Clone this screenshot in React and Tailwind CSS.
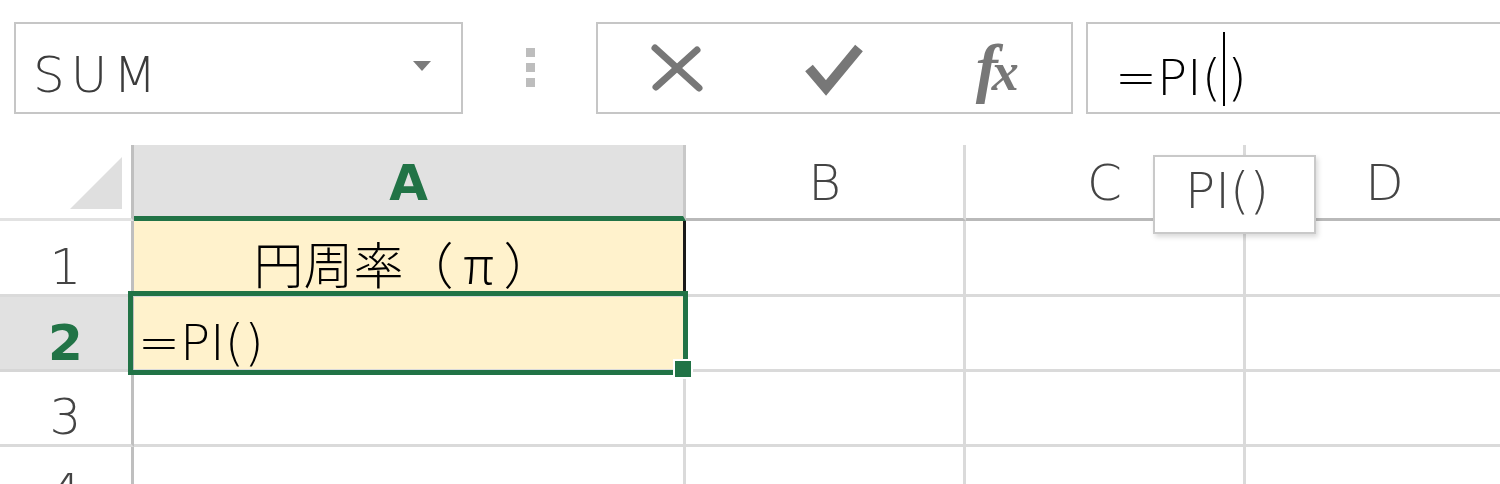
import React from "react";

const rows = [
  { n: "1", h: "h-[76px]" },
  { n: "2", h: "h-[75px]" },
  { n: "3", h: "h-[75px]" },
  { n: "4", h: "h-[75px]" },
];

const title = ["円", "周", "率", "（", "π", "）"];

function Dots() {
  return (
    <div className="ml-[63px] mt-[26px] flex flex-col gap-[6px]">
      <span className="h-[9px] w-[9px] bg-[#bdbdbd]" />
      <span className="h-[9px] w-[9px] bg-[#bdbdbd]" />
      <span className="h-[9px] w-[9px] bg-[#bdbdbd]" />
    </div>
  );
}

function RowHeader({ n, h }) {
  if (n === "2") {
    return (
      <div className={`${h} flex items-end justify-center border-r-[3px] border-b-[3px] border-r-[#bfbfbf] border-b-[#d6d6d6] bg-[#e1e1e1] pb-[1px] text-[50px] font-bold leading-[50px] text-[#217346]`}>
        {n}
      </div>
    );
  }
  return (
    <div className={`${h} flex items-end justify-center border-r-[3px] border-b-[3px] border-r-[#bfbfbf] border-b-[#dadada] pb-[2px] text-[50px] leading-[50px] text-[#444]`}>
      {n}
    </div>
  );
}

function Blank({ h }) {
  return <div className={`${h} border-r-[3px] border-b-[3px] border-[#dadada]`} />;
}

export default function App() {
  return (
    <div className="relative h-[484px] w-[1500px] overflow-hidden bg-white font-['DejaVu_Sans','Noto_Sans_CJK_JP',sans-serif] font-light">
      {/* formula bar */}
      <div className="flex h-[145px] items-start pt-[22px]">
        <div className="ml-[14px] flex h-[92px] w-[449px] items-start border-2 border-[#c6c6c6] pl-[17px] pt-[26px]">
          <span className="text-[50px] leading-[50px] tracking-[6px] text-[#3c3c3c]">SUM</span>
          <svg className="ml-auto mr-[30px] mt-[11px]" width="18" height="10" viewBox="0 0 18 10">
            <path d="M0 0h18L9 10z" fill="#7b7b7b" />
          </svg>
        </div>

        <Dots />

        <div className="ml-[61px] grid h-[92px] w-[477px] grid-cols-3 items-center border-2 border-[#c6c6c6]">
          <div className="flex justify-center">
            <svg width="54" height="50" viewBox="0 0 54 50">
              <path d="M5 5 L49 45" stroke="#777" strokeWidth="7" strokeLinecap="round" fill="none" />
              <path d="M47 7 L6 44" stroke="#777" strokeWidth="7" strokeLinecap="round" fill="none" />
            </svg>
          </div>
          <div className="flex justify-center pt-[4px]">
            <svg width="58" height="52" viewBox="0 0 58 52">
              <polyline points="4,24 21,44 54,4" stroke="#777" strokeWidth="10" fill="none" strokeLinejoin="miter" />
            </svg>
          </div>
          <div className="flex justify-center pl-[4px]">
            <span className="font-['Liberation_Serif',serif] text-[66px] font-bold italic leading-none tracking-[-6px] text-[#777]">
              f<span className="text-[54px]">x</span>
            </span>
          </div>
        </div>

        <div className="ml-[13px] flex h-[92px] flex-1 items-start border-2 border-r-0 border-[#c6c6c6] pl-[27px] pt-[29px] text-[50px] leading-[50px] text-black">
          <span>=PI(</span>
          <span className="mx-[2px] -mt-[21px] h-[74px] w-[2px] bg-black" />
          <span>)</span>
        </div>
      </div>

      {/* sheet */}
      <div className="grid grid-cols-[134px_552px_280px_280px_280px]">
        <div className="flex h-[76px] items-end justify-end border-r-[3px] border-b-[3px] border-r-[#bfbfbf] border-b-[#e2e2e2] pr-[9px] pb-[9px]">
          <svg width="52" height="52" viewBox="0 0 52 52">
            <polygon points="52,0 52,52 0,52" fill="#dfdfdf" />
          </svg>
        </div>
        <div className="flex h-[76px] items-end justify-center border-r-[3px] border-b-[5px] border-r-[#c8c8c8] border-b-[#217346] bg-[#e1e1e1] pb-[8px] text-[50px] font-bold leading-[50px] text-[#217346]">
          A
        </div>
        <div className="flex h-[76px] items-end justify-center border-r-[3px] border-b-[3px] border-r-[#dadada] border-b-[#b9b9b9] pb-[10px] text-[50px] leading-[50px] text-[#444]">
          B
        </div>
        <div className="flex h-[76px] items-end justify-center border-r-[3px] border-b-[3px] border-r-[#dadada] border-b-[#b9b9b9] pb-[10px] text-[50px] leading-[50px] text-[#444]">
          C
        </div>
        <div className="flex h-[76px] items-end justify-center border-r-[3px] border-b-[3px] border-r-[#dadada] border-b-[#b9b9b9] pb-[10px] text-[50px] leading-[50px] text-[#444]">
          D
        </div>

        {rows.map((r) => (
          <React.Fragment key={r.n}>
            <RowHeader n={r.n} h={r.h} />
            {r.n === "1" && (
              <div className="flex h-[76px] items-end justify-center border-r-[3px] border-b-[3px] border-r-[#1a1a1a] border-b-[#dadada] bg-[#fff2cc] pr-[10px] pb-[7px] font-['Noto_Sans_CJK_JP',sans-serif] text-[50px] font-light leading-[50px] text-black">
                {title.map((c, i) => (
                  <span key={i} className="inline-block w-[50px] text-center">
                    {c}
                  </span>
                ))}
              </div>
            )}
            {r.n === "2" && (
              <div className="flex h-[75px] items-end border-r-[3px] border-b-[3px] border-[#dadada] bg-[#fff2cc] pl-[4px] pb-[1px] text-[50px] leading-[50px] text-black">
                =PI()
              </div>
            )}
            {r.n !== "1" && r.n !== "2" && <Blank h={r.h} />}
            <Blank h={r.h} />
            <Blank h={r.h} />
            <Blank h={r.h} />
          </React.Fragment>
        ))}
      </div>

      {/* selection */}
      <div className="absolute left-[128px] top-[291px] h-[84px] w-[560px] border-[5px] border-[#217346]" />
      <div className="absolute left-[673px] top-[359px] h-[20px] w-[20px] border-2 border-white bg-[#217346]" />

      {/* function tooltip */}
      <div className="absolute left-[1153px] top-[155px] h-[79px] w-[163px] border-2 border-[#c9c9c9] bg-white pl-[30px] pt-[9px] text-[50px] leading-[50px] text-[#444] shadow-[2px_3px_5px_rgba(0,0,0,0.15)]">
        PI()
      </div>
    </div>
  );
}
